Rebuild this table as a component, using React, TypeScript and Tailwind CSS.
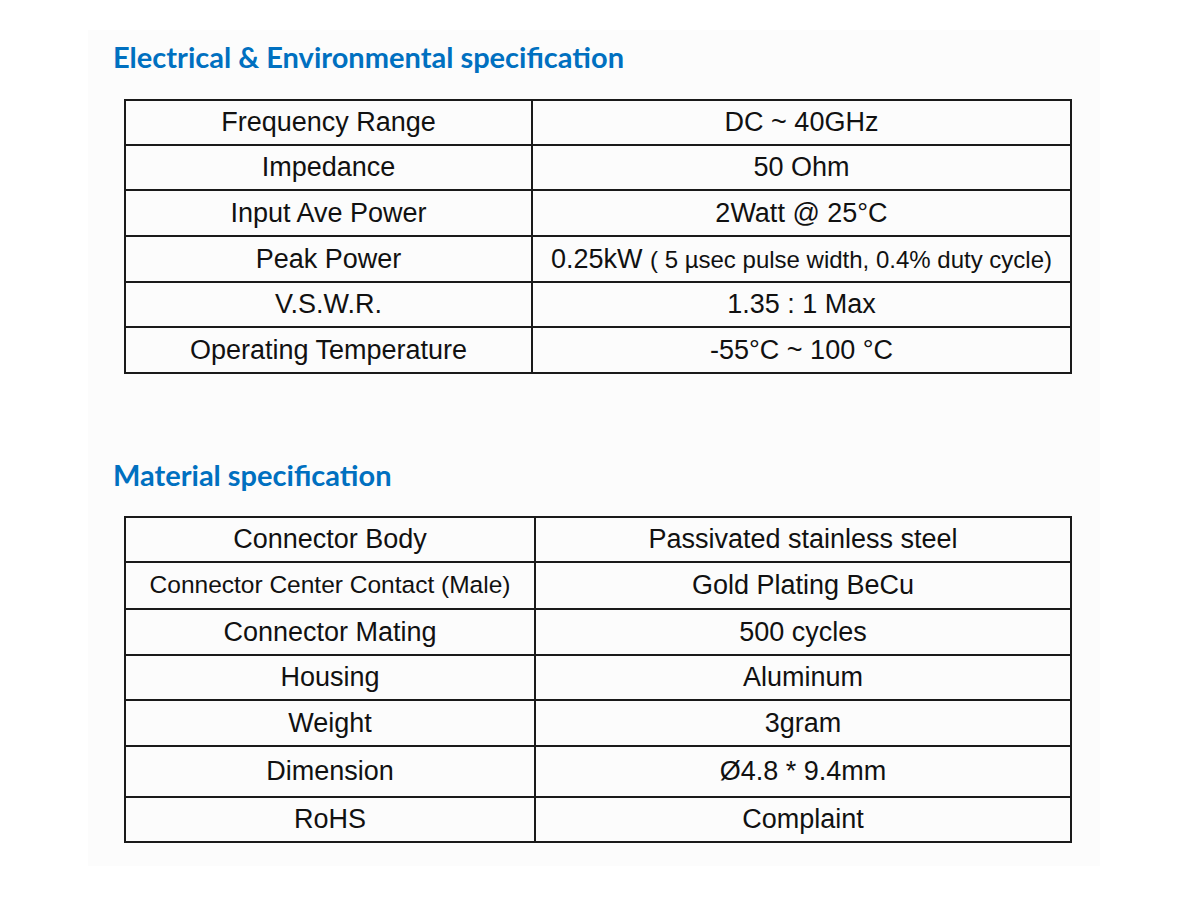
const electrical: [string, React.ReactNode][] = [
  ['Frequency Range', 'DC ~ 40GHz'],
  ['Impedance', '50 Ohm'],
  ['Input Ave Power', '2Watt @ 25°C'],
  [
    'Peak Power',
    <span>
      0.25kW <span className="text-[24px]">( 5 µsec pulse width, 0.4% duty cycle)</span>
    </span>,
  ],
  ['V.S.W.R.', '1.35 : 1 Max'],
  ['Operating Temperature', '-55°C ~ 100 °C'],
]
const electricalHeights = ['h-[45px]', 'h-[45px]', 'h-[46px]', 'h-[46px]', 'h-[45px]', 'h-[46px]']

const material: [React.ReactNode, string][] = [
  ['Connector Body', 'Passivated stainless steel'],
  [<span className="text-[24.5px]">Connector Center Contact (Male)</span>, 'Gold Plating BeCu'],
  ['Connector Mating', '500 cycles'],
  ['Housing', 'Aluminum'],
  ['Weight', '3gram'],
  ['Dimension', 'Ø4.8 * 9.4mm'],
  ['RoHS', 'Complaint'],
]
const materialHeights = ['h-[45px]', 'h-[47px]', 'h-[46px]', 'h-[45px]', 'h-[46px]', 'h-[51px]', 'h-[45px]']

function SpecTable({
  rows,
  heights,
  leftWidth,
}: {
  rows: [React.ReactNode, React.ReactNode][]
  heights: string[]
  leftWidth: string
}) {
  return (
    <div className="ml-[36px] w-[948px] border-t-2 border-x-2 border-[#1a1a1a]">
      {rows.map(([label, value], i) => (
        <div key={i} className={`flex border-b-2 border-[#1a1a1a] ${heights[i]}`}>
          <div className={`${leftWidth} shrink-0 border-r-2 border-[#1a1a1a] flex items-center justify-center whitespace-nowrap`}>
            {label}
          </div>
          <div className="flex-1 flex items-center justify-center whitespace-nowrap">{value}</div>
        </div>
      ))}
    </div>
  )
}

export default function App() {
  return (
    <div className="w-[1200px] h-[901px] bg-white pt-[30px] font-['Liberation_Sans',Arial,sans-serif] text-[27px] text-[#111]">
      <div className="ml-[88px] w-[1012px] h-[836px] bg-[#fcfcfc] pt-[10px]">
        <h2 className="ml-[25px] h-[34px] leading-[34px] font-['Lato','Open_Sans',sans-serif] font-bold text-[29px] text-[#0070c0]">
          Electrical &amp; Environmental specification
        </h2>
        <div className="mt-[25px]">
          <SpecTable rows={electrical} heights={electricalHeights} leftWidth="w-[407px]" />
        </div>
        <h2 className="mt-[84px] ml-[25px] h-[34px] leading-[34px] font-['Lato','Open_Sans',sans-serif] font-bold text-[29px] text-[#0070c0]">
          Material specification
        </h2>
        <div className="mt-[24px]">
          <SpecTable rows={material} heights={materialHeights} leftWidth="w-[410px]" />
        </div>
      </div>
    </div>
  )
}
